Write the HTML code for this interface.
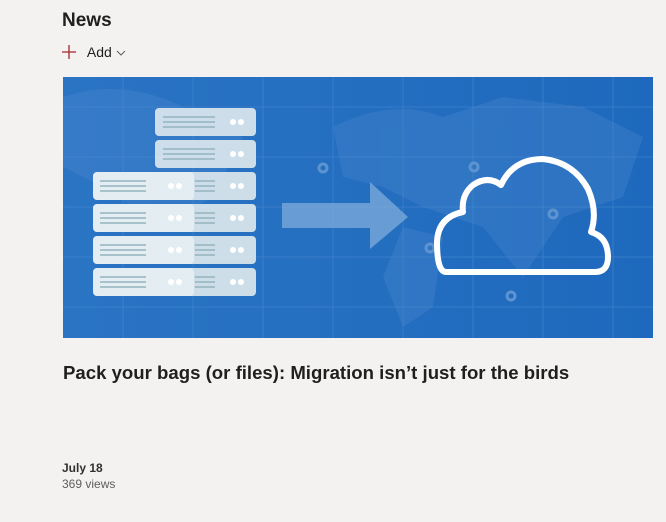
<!DOCTYPE html>
<html><head><style>
body{margin:0;background:#f3f2f1;width:666px;height:522px;overflow:hidden;font-family:"Liberation Sans",sans-serif;color:#201f1e}
.h{position:absolute;left:62px;top:10px;font-size:19px;font-weight:bold;}
.add{position:absolute;left:62px;top:44px;font-size:14px}
.t{position:absolute;left:63px;top:362px;font-size:18.6px;font-weight:bold}
.d{position:absolute;left:62px;top:461px;font-size:12px;font-weight:bold;color:#323130}
.v{position:absolute;left:62px;top:477px;font-size:12px;color:#605e5c}
</style></head><body>
<div class="h">News</div>
<div class="add"><svg width="14" height="14" style="vertical-align:-2px"><path d="M7 0V14M0 7H14" stroke="#a4262c" stroke-width="1.3"/></svg>&nbsp;&nbsp; Add <svg width="10" height="8"><path d="M1 2l4 4 4-4" fill="none" stroke="#605e5c"/></svg></div>
<svg style="position:absolute;left:63px;top:77px" width="590" height="261" viewBox="0 0 590 261">
<defs><linearGradient id="g" x1="0" x2="1"><stop offset="0" stop-color="#2b74c4"/><stop offset="1" stop-color="#1e69bd"/></linearGradient></defs>
<rect width="590" height="261" fill="url(#g)"/>
<g stroke="#4b8bd2" stroke-width="1" opacity=".5">
<path d="M0 30H590M0 80H590M0 130H590M0 180H590M0 230H590M60 0V261M130 0V261M200 0V261M270 0V261M340 0V261M410 0V261M480 0V261M550 0V261"/></g>
<g fill="#4e8ccf" opacity=".3"><path d="M0 20Q60 0 120 30L180 60 150 120 100 150 40 110 0 90Z"/><path d="M270 50Q330 20 380 40L440 20 520 30 580 60 560 120 500 140 460 200 420 150 360 130 320 110 280 100Z"/><path d="M340 150L380 160 370 230 340 250 320 200Z"/></g>
<g fill="#d6e4ec" opacity=".95">
<rect x="92" y="31" width="101" height="28" rx="4"/><rect x="92" y="63" width="101" height="28" rx="4"/>
<rect x="92" y="95" width="101" height="28" rx="4"/><rect x="92" y="127" width="101" height="28" rx="4"/>
<rect x="92" y="159" width="101" height="28" rx="4"/><rect x="92" y="191" width="101" height="28" rx="4"/></g>
<g fill="#e3edf2"><rect x="30" y="95" width="101" height="28" rx="4"/><rect x="30" y="127" width="101" height="28" rx="4"/><rect x="30" y="159" width="101" height="28" rx="4"/><rect x="30" y="191" width="101" height="28" rx="4"/></g>
<g stroke="#93b4be" stroke-width="1.5">
<path d="M100 40h52M100 45h52M100 50h52M100 72h52M100 77h52M100 82h52M132 104h20M132 109h20M132 114h20M132 136h20M132 141h20M132 146h20M132 168h20M132 173h20M132 178h20M132 200h20M132 205h20M132 210h20"/>
<path d="M37 104h46M37 109h46M37 114h46M37 136h46M37 141h46M37 146h46M37 168h46M37 173h46M37 178h46M37 200h46M37 205h46M37 210h46"/></g>
<g fill="#fff"><circle cx="170" cy="45" r="3"/><circle cx="178" cy="45" r="3"/><circle cx="170" cy="77" r="3"/><circle cx="178" cy="77" r="3"/><circle cx="170" cy="109" r="3"/><circle cx="178" cy="109" r="3"/><circle cx="170" cy="141" r="3"/><circle cx="178" cy="141" r="3"/><circle cx="170" cy="173" r="3"/><circle cx="178" cy="173" r="3"/><circle cx="170" cy="205" r="3"/><circle cx="178" cy="205" r="3"/>
<circle cx="108" cy="109" r="3"/><circle cx="116" cy="109" r="3"/><circle cx="108" cy="141" r="3"/><circle cx="116" cy="141" r="3"/><circle cx="108" cy="173" r="3"/><circle cx="116" cy="173" r="3"/><circle cx="108" cy="205" r="3"/><circle cx="116" cy="205" r="3"/></g>
<path d="M219 126H307V105L345 140 307 172V151H219Z" fill="#79a8d8" opacity=".8"/>
<g fill="none" stroke="#5c93d0" stroke-width="3"><circle cx="260" cy="91" r="4"/><circle cx="411" cy="90" r="4"/><circle cx="490" cy="137" r="4"/><circle cx="448" cy="219" r="4"/><circle cx="367" cy="171" r="4"/></g>
<path d="M383 195H532Q545 195 545 180Q545 160 528 155Q535 135 525 112Q510 85 480 82Q450 82 438 108Q425 98 410 108Q398 118 400 135Q375 140 374 165Q374 195 383 195Z" fill="none" stroke="#fff" stroke-width="6" stroke-linejoin="round"/>
</svg>
<div class="t">Pack your bags (or files): Migration isn’t just for the birds</div>
<div class="d">July 18</div>
<div class="v">369 views</div>
</body></html>
